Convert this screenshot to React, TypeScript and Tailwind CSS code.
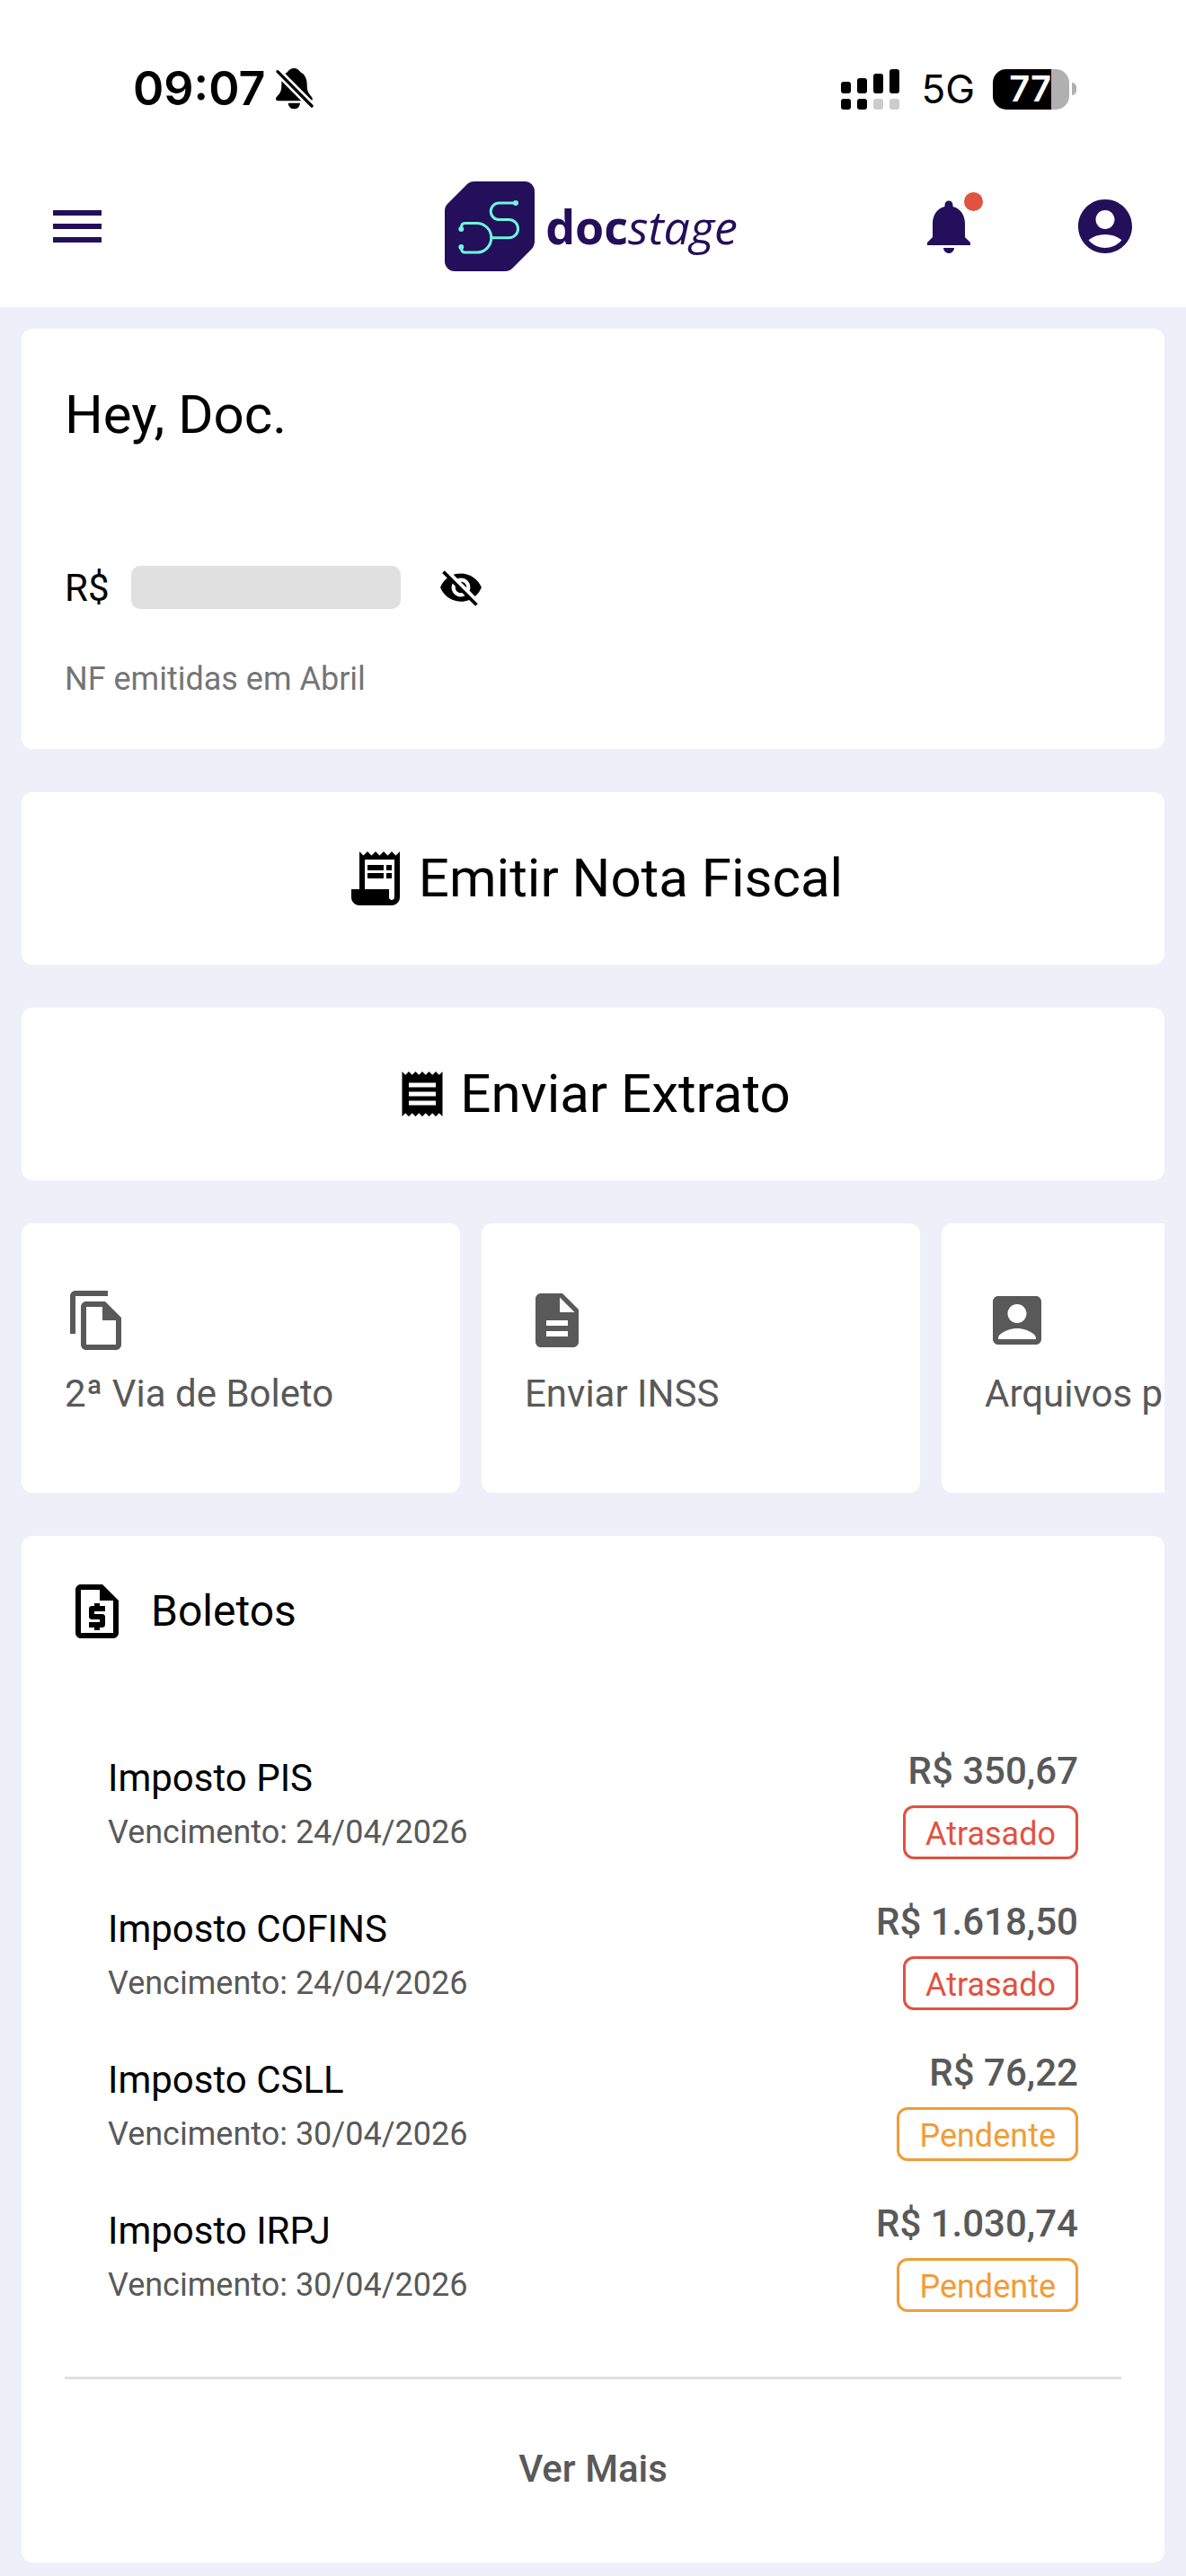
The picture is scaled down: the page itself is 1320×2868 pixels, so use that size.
import {
  MdAccountBox,
  MdAccountCircle,
  MdDescription,
  MdMenu,
  MdNotifications,
  MdOutlineFileCopy,
  MdOutlineRequestQuote,
  MdReceipt,
  MdVisibilityOff,
} from "react-icons/md";

const boletos = [
  { name: "Imposto PIS", due: "24/04/2026", value: "350,67", late: true },
  { name: "Imposto COFINS", due: "24/04/2026", value: "1.618,50", late: true },
  { name: "Imposto CSLL", due: "30/04/2026", value: "76,22", late: false },
  { name: "Imposto IRPJ", due: "30/04/2026", value: "1.030,74", late: false },
];

const shortcuts = [
  { label: "2ª Via de Boleto", Icon: MdOutlineFileCopy },
  { label: "Enviar INSS", Icon: MdDescription },
  { label: "Arquivos p", Icon: MdAccountBox },
];

function StatusBar() {
  return (
    <div className="flex h-[162px] items-center justify-between pt-9 pr-[122px] pl-[148px] font-[Inter,sans-serif] text-black">
      <div className="flex items-center gap-3">
        <span className="text-[52px] leading-[60px] font-semibold">09:07</span>
        <svg className="h-[46px] w-[42px]" viewBox="567 76 126 138">
          <path d="M628 76c-12 0-18 7-22 13-14 7-20 24-20 40 0 22-3 28-16 42-6 8-3 14 4 14h108c8 0 10-8 4-14-12-14-15-22-15-42 0-18-8-34-22-40-4-6-10-13-21-13z" />
          <path d="M608 192h40a20 20 0 0 1-40 0z" />
          <path d="M567 81 694 209" stroke="#fff" strokeWidth="26" />
          <path
            d="M573 87 687 202"
            stroke="#000"
            strokeWidth="10"
            strokeLinecap="round"
          />
        </svg>
      </div>
      <div className="flex items-center">
        <svg className="h-[45px] w-[65px]" viewBox="0 0 65 45">
          <rect x="0" y="14" width="11" height="13" rx="3" />
          <rect x="18" y="10" width="11" height="17" rx="3" />
          <rect x="36" y="5" width="11" height="22" rx="3" />
          <rect x="54" y="0" width="11" height="27" rx="3" />
          <rect x="0" y="33" width="11" height="12" rx="3" />
          <rect x="18" y="33" width="11" height="12" rx="3" />
          <rect x="36" y="33" width="11" height="12" rx="3" fill="#ccc" />
          <rect x="54" y="33" width="11" height="12" rx="3" fill="#ccc" />
        </svg>
        <span className="ml-6 text-[44px] leading-[60px]">5G</span>
        <div className="ml-5 flex h-[45px] w-[85px] items-center justify-end rounded-[15px] bg-gradient-to-r from-black from-[76%] to-[#b0b0b0] to-[76%] pr-5">
          <span className="text-[40px] leading-[50px] font-semibold text-white">
            77
          </span>
        </div>
        <div className="ml-[3px] h-[14px] w-[5px] rounded-r-full bg-[#b0b0b0]" />
      </div>
    </div>
  );
}

function Logo() {
  return (
    <a href="#" className="flex items-center gap-3 text-[#230f5a]">
      <svg className="size-[100px]" viewBox="0 0 100 100" fill="none">
        <path
          d="M33 0h56a11 11 0 0 1 11 11v56q0 5-4 9L75 97q-3 3-8 3H11A11 11 0 0 1 0 89V33q0-5 3-8L25 3q3-3 8-3z"
          fill="#230f5a"
        />
        <g stroke="#6ff7dc" strokeWidth="3">
          <path d="M79 24H60.500a9.300 9.300 0 0 0 0 18.600H71.500a10 10 0 0 1 0 20.100H52" />
          <path d="M18.500 53v-2q0-4.500 4-4.500H35.500a16.300 16.300 0 0 1 0 32.600H22.500q-4 0-4-4.500v-2" />
        </g>
        <g fill="#6ff7dc">
          <circle cx="79" cy="24" r="3" />
          <circle cx="18.300" cy="53" r="3" />
          <circle cx="18.300" cy="73" r="3" />
        </g>
      </svg>
      <span className="flex items-baseline font-['Open_Sans',sans-serif] text-[52px] leading-[60px]">
        <span className="font-bold">doc</span>
        <span className="italic">stage</span>
      </span>
    </a>
  );
}

function ReceiptLong() {
  return (
    <svg className="size-[72px]" viewBox="0 0 24 24" fill="currentColor">
      <path d="M19.500 3.500 18 2l-1.500 1.500L15 2l-1.500 1.500L12 2l-1.500 1.500L9 2 7.500 3.500 6 2v14H3v3c0 1.660 1.340 3 3 3h12c1.660 0 3-1.340 3-3V2l-1.500 1.500zM19 19c0 .550-.450 1-1 1s-1-.450-1-1v-3H8V5h11v14z" />
      <path d="M9 7h6v2H9zM16 7h2v2h-2zM9 10h6v2H9zM16 10h2v2h-2z" />
    </svg>
  );
}

export default function App() {
  return (
    <div className="min-h-screen bg-[#efeffa] font-[Roboto,sans-serif] text-black">
      <header className="bg-white">
        <StatusBar />
        <div className="grid h-[180px] grid-cols-[1fr_auto_1fr] items-center pr-[54px] pl-[50px] text-[#230f5a]">
          <button aria-label="Menu" className="justify-self-start">
            <MdMenu className="size-[72px]" />
          </button>
          <Logo />
          <div className="flex justify-end gap-[102px]">
            <button aria-label="Notificações" className="relative">
              <MdNotifications className="size-[72px]" />
              <span className="absolute -top-0.5 -right-0.5 size-[21px] rounded-full bg-[#e15241]" />
            </button>
            <button aria-label="Conta">
              <MdAccountCircle className="size-[72px]" />
            </button>
          </div>
        </div>
      </header>

      <main className="flex flex-col gap-12 px-6 pt-6 pb-[15px]">
        <section className="rounded-xl bg-white p-12">
          <h1 className="text-[60px] leading-[96px]">Hey, Doc.</h1>
          <div className="mt-[120px] flex h-12 items-center text-[42px]">
            <span>R$</span>
            <div className="ml-6 h-12 w-[300px] rounded-[10px] bg-[#e0e0e0]" />
            <button aria-label="Mostrar valor" className="ml-[42px]">
              <MdVisibilityOff className="size-[50px]" />
            </button>
          </div>
          <p className="mt-12 text-[36px] leading-[60px] text-[#757575]">
            NF emitidas em Abril
          </p>
        </section>

        <button className="flex h-[192px] items-center justify-center gap-3 rounded-xl bg-white text-[60px]">
          <ReceiptLong />
          Emitir Nota Fiscal
        </button>
        <button className="flex h-[192px] items-center justify-center gap-3 rounded-xl bg-white text-[60px]">
          <MdReceipt className="size-[60px]" />
          Enviar Extrato
        </button>

        <nav className="flex gap-6 overflow-hidden">
          {shortcuts.map(({ label, Icon }) => (
            <a
              key={label}
              href="#"
              className="h-[300px] w-[488px] shrink-0 rounded-xl bg-white px-12 pt-[72px] text-[#595959]">
              <Icon className="size-[72px]" />
              <span className="mt-4 block text-[42px] leading-[60px] whitespace-nowrap">
                {label}
              </span>
            </a>
          ))}
        </nav>

        <section className="rounded-xl bg-white px-12 pt-12">
          <div className="flex items-center gap-6">
            <MdOutlineRequestQuote className="size-[72px]" />
            <h2 className="text-[48px] leading-[72px]">Boletos</h2>
          </div>
          <ul className="mt-28 flex flex-col gap-10 px-12">
            {boletos.map((boleto) => (
              <li key={boleto.name} className="flex items-end justify-between">
                <div className="leading-[60px]">
                  <p className="text-[42px]">{boleto.name}</p>
                  <p className="text-[36px] text-[#595959]">
                    Vencimento: {boleto.due}
                  </p>
                </div>
                <div className="flex flex-col items-end gap-2">
                  <p className="text-[42px] leading-[60px] font-medium text-[#595959]">
                    R$ {boleto.value}
                  </p>
                  <span
                    className={`flex h-[60px] items-center rounded-xl border-3 px-[22px] pt-1 text-[36px] ${
                      boleto.late
                        ? "border-[#e15241] text-[#e15241]"
                        : "border-[#f09d38] text-[#f09d38]"
                    }`}>
                    {boleto.late ? "Atrasado" : "Pendente"}
                  </span>
                </div>
              </li>
            ))}
          </ul>
          <hr className="mt-[72px] border-t-3 border-[#e0e0e0]" />
          <button className="w-full pt-[70px] pb-[74px] text-[42px] leading-[60px] font-medium text-[#595959]">
            Ver Mais
          </button>
        </section>
      </main>
    </div>
  );
}
